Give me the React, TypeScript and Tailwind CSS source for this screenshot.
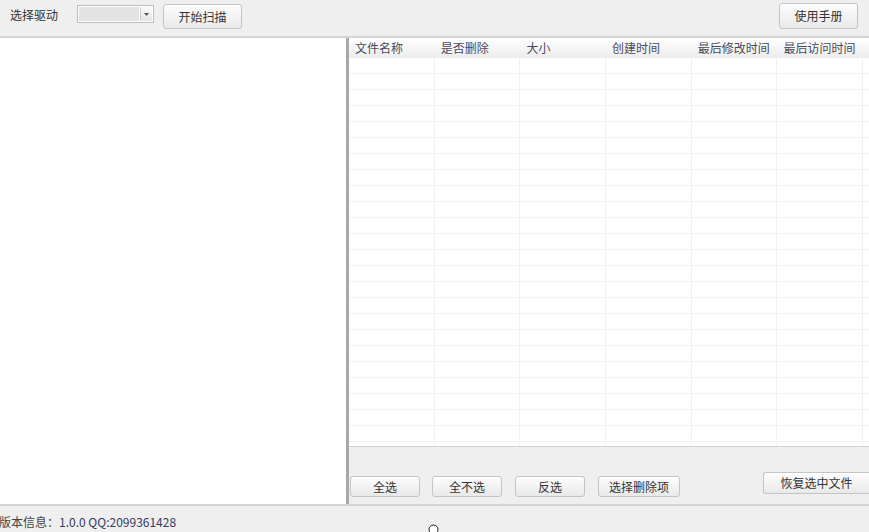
import React from "react";

const font = { fontFamily: '"Noto Sans CJK SC", "Noto Sans", sans-serif' };

function Btn({ children, className = "" }: { children: React.ReactNode; className?: string }) {
  return (
    <div
      className={
        "flex items-center justify-center rounded-[3px] border border-[#c4c4c4] bg-gradient-to-b from-[#fdfdfd] to-[#e9e9e9] text-[12px] text-[#333] shadow-[inset_0_1px_0_#fff] " +
        className
      }
    >
      {children}
    </div>
  );
}

const cols = ["文件名称", "是否删除", "大小", "创建时间", "最后修改时间", "最后访问时间"];

export default function App() {
  const rows = Array.from({ length: 25 });
  return (
    <div style={font} className="relative flex h-[532px] w-[869px] flex-col overflow-hidden bg-[#efefef] text-[12px] text-[#333]">
      {/* top bar */}
      <div className="flex h-[36px] items-start">
        <div className="ml-[10px] mt-[6px] leading-[18px]">选择驱动</div>
        <div className="ml-[19px] mt-[5px] flex h-[18px] w-[77px] border border-[#bdbdbd] bg-white p-[1px]">
          <div className="flex-1 bg-[#e3e3e3]" />
          <div className="ml-[1px] flex w-[12px] items-center justify-center border-l border-[#cfcfcf] bg-gradient-to-b from-[#fafafa] to-[#e4e4e4]">
            <svg width="5" height="3" viewBox="0 0 5 3"><path d="M0 0h5L2.5 3z" fill="#555" /></svg>
          </div>
        </div>
        <Btn className="ml-[9px] mt-[4px] h-[25px] w-[79px]">开始扫描</Btn>
        <div className="flex-1" />
        <Btn className="mr-[11px] mt-[3px] h-[26px] w-[79px]">使用手册</Btn>
      </div>
      <div className="h-[2px] bg-[#d4d4d4]" />

      {/* main */}
      <div className="flex h-[466px]">
        <div className="w-[346px] bg-white" />
        <div className="w-[3px] bg-[#a8a8a8]" />
        <div className="flex flex-1 flex-col">
          <div className="flex h-[409px] flex-col overflow-hidden border-b border-[#d2d2d2] bg-white">
            <div className="flex h-[20px] shrink-0 border-b border-[#ececec] bg-gradient-to-b from-[#ffffff] to-[#ededed]">
              {cols.map((c) => (
                <div key={c} className="w-[85.7px] shrink-0 pl-[6px] leading-[19px] text-[#4a4a5a]">
                  {c}
                </div>
              ))}
            </div>
            {rows.map((_, i) => (
              <div key={i} className="flex h-[16px] shrink-0 border-b border-[#f1f1f1]">
                {cols.map((c) => (
                  <div key={c} className="w-[85.7px] shrink-0 border-r border-[#f1f1f1]" />
                ))}
              </div>
            ))}
          </div>
          <div className="flex flex-1 items-start">
            <Btn className="ml-[1px] mt-[29px] h-[21px] w-[70px]">全选</Btn>
            <Btn className="ml-[12px] mt-[29px] h-[21px] w-[70px]">全不选</Btn>
            <Btn className="ml-[13px] mt-[29px] h-[21px] w-[70px]">反选</Btn>
            <Btn className="ml-[13px] mt-[29px] h-[21px] w-[82px]">选择删除项</Btn>
            <div className="flex-1" />
            <Btn className="mt-[25px] h-[22px] w-[106px] rounded-r-none border-r-0">恢复选中文件</Btn>
          </div>
        </div>
      </div>
      <div className="h-[2px] bg-[#d4d4d4]" />

      {/* status */}
      <div className="flex flex-1 items-center pt-[6px]">
        <span className="-ml-[1px] text-[#444]">版本信息：</span>
        <span className="text-[#343a5e]">1.0.0 QQ:2099361428</span>
      </div>

      <svg className="absolute left-[428px] top-[524px]" width="11" height="11" viewBox="0 0 11 11">
        <circle cx="5.5" cy="5.5" r="4.5" fill="#fff" stroke="#222" strokeWidth="1" />
      </svg>
    </div>
  );
}
